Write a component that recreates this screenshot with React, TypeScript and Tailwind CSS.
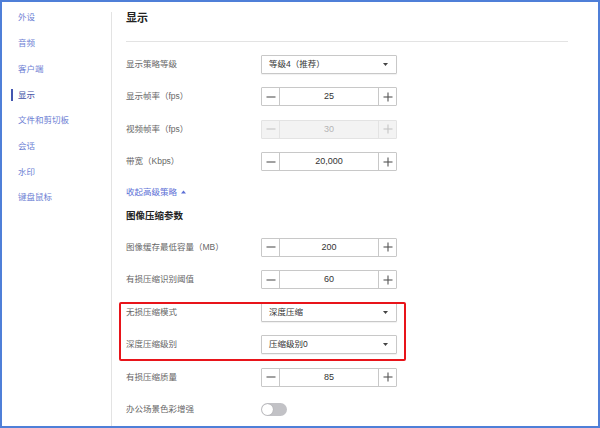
import React from "react";

const FONT = { fontFamily: '"Liberation Sans", "Noto Sans CJK SC", sans-serif' };

const navItems = ["外设", "音频", "客户端", "显示", "文件和剪切板", "会话", "水印", "键盘鼠标"];

function Minus({ color }: { color: string }) {
  return (
    <svg width="10" height="10" viewBox="0 0 10 10">
      <line x1="0.5" y1="5" x2="9.5" y2="5" stroke={color} strokeWidth="1.1" />
    </svg>
  );
}
function Plus({ color }: { color: string }) {
  return (
    <svg width="10" height="10" viewBox="0 0 10 10">
      <line x1="0.5" y1="5" x2="9.5" y2="5" stroke={color} strokeWidth="1.1" />
      <line x1="5" y1="0.5" x2="5" y2="9.5" stroke={color} strokeWidth="1.1" />
    </svg>
  );
}

function Stepper({ value, disabled }: { value: string; disabled?: boolean }) {
  const border = disabled ? "border-[#e3e3e3]" : "border-[#c8c8c8]";
  const ic = disabled ? "#c4c4c4" : "#555";
  return (
    <div
      className={`flex h-[19px] w-[136px] border ${border} rounded-[1px] ${disabled ? "bg-[#f3f3f3]" : "bg-white"}`}
    >
      <div className={`flex w-[18px] items-center justify-center border-r ${border}`}>
        <Minus color={ic} />
      </div>
      <div
        className={`flex flex-1 items-center justify-center text-[9px] ${disabled ? "text-[#b5b5b5]" : "text-[#333]"}`}
      >
        {value}
      </div>
      <div className={`flex w-[18px] items-center justify-center border-l ${border}`}>
        <Plus color={ic} />
      </div>
    </div>
  );
}

function Select({ value }: { value: string }) {
  return (
    <div className="flex h-[19px] w-[136px] items-center justify-between rounded-[1px] border border-[#c8c8c8] bg-white pl-[7px] pr-[8px] shadow-[0_1px_1px_rgba(0,0,0,0.06)]">
      <span className="text-[8.5px] text-[#333]">{value}</span>
      <svg width="5" height="3" viewBox="0 0 5 3">
        <path d="M0 0 L5 0 L2.5 3 Z" fill="#444" />
      </svg>
    </div>
  );
}

function Row({ label, children }: { label: string; children: React.ReactNode }) {
  return (
    <div className="flex h-[32.5px] items-center">
      <div className="w-[135px] text-[8.5px] text-[#666]">{label}</div>
      {children}
    </div>
  );
}

export default function App() {
  return (
    <div
      className="box-border flex h-[428px] w-[600px] border-2 border-[#4f7fd8] bg-white"
      style={FONT}
    >
      <div className="flex w-[109px] flex-col pt-[3px]">
        {navItems.map((n) => (
          <div key={n} className="relative flex h-[25.7px] items-center pl-[16px]">
            {n === "显示" && (
              <div className="absolute left-[9px] top-[7px] h-[12px] w-[2px] bg-[#4456b0]" />
            )}
            <span className={`text-[8.5px] ${n === "显示" ? "text-[#3f4fa6]" : "text-[#6e7fd4]"}`}>{n}</span>
          </div>
        ))}
      </div>
      <div className="mt-[10px] flex flex-1 flex-col border-l border-[#e3e3e3] pl-[14px]">
        <div className="h-[30px] w-[442px] border-b border-[#e3e3e3] text-[11px] font-bold leading-[12px] text-[#222]">
          显示
        </div>
        <div className="mt-[6px] flex flex-col">
          <Row label="显示策略等级">
            <Select value="等级4（推荐）" />
          </Row>
          <Row label="显示帧率（fps）">
            <Stepper value="25" />
          </Row>
          <Row label="视频帧率（fps）">
            <Stepper value="30" disabled />
          </Row>
          <Row label="带宽（Kbps）">
            <Stepper value="20,000" />
          </Row>
        </div>
        <div className="flex h-[28px] items-center gap-[4px] text-[8.5px] text-[#5c6fd6]">
          <span>收起高级策略</span>
          <svg width="5" height="4" viewBox="0 0 5 4">
            <path d="M0 3.5 L5 3.5 L2.5 0.5 Z" fill="#5c6fd6" />
          </svg>
        </div>
        <div className="flex h-[20px] items-center text-[9.5px] font-bold text-[#222]">图像压缩参数</div>
        <div className="mt-[5px] flex flex-col">
          <Row label="图像缓存最低容量（MB）">
            <Stepper value="200" />
          </Row>
          <Row label="有损压缩识别阈值">
            <Stepper value="60" />
          </Row>
          <div className="relative">
            <div className="pointer-events-none absolute left-[-7px] top-[6px] h-[59px] w-[287px] rounded-[2px] border-2 border-[#e8141a]" />
            <Row label="无损压缩模式">
              <Select value="深度压缩" />
            </Row>
            <Row label="深度压缩级别">
              <Select value="压缩级别0" />
            </Row>
          </div>
          <Row label="有损压缩质量">
            <Stepper value="85" />
          </Row>
          <Row label="办公场景色彩增强">
            <div className="flex h-[13px] w-[26px] items-center rounded-full bg-[#c2c2c6] px-[1px]">
              <div className="h-[11px] w-[11px] rounded-full bg-white shadow-[0_0_1px_rgba(0,0,0,0.3)]" />
            </div>
          </Row>
        </div>
      </div>
    </div>
  );
}
